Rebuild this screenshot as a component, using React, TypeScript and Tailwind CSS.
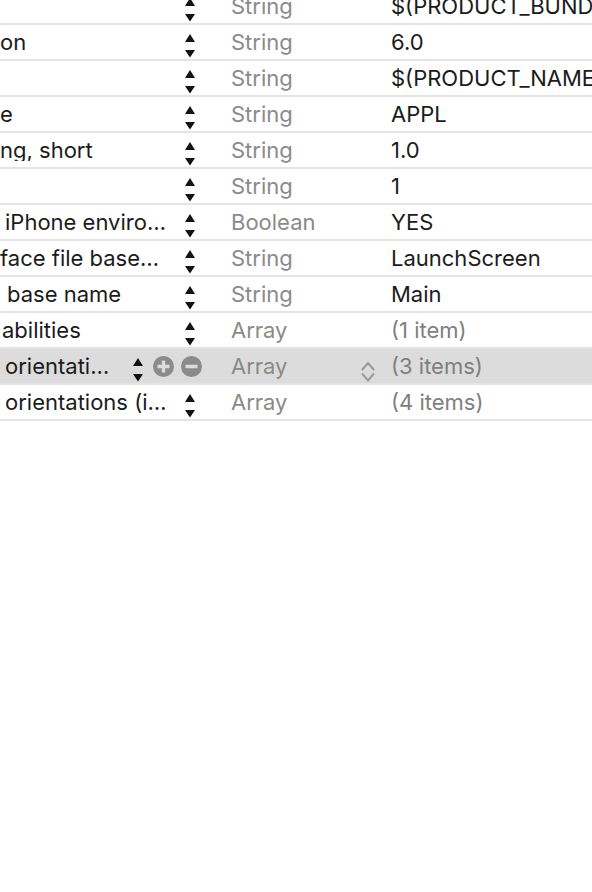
type Row = {
  key: string;
  pad: number;
  type: string;
  value: string;
  valueGray?: boolean;
  selected?: boolean;
};

const ROWS: Row[] = [
  { key: "", pad: 0, type: "String", value: "$(PRODUCT_BUNDLE_IDENTIFIER)" },
  { key: "on", pad: 0, type: "String", value: "6.0" },
  { key: "", pad: 0, type: "String", value: "$(PRODUCT_NAME)" },
  { key: "e", pad: 0, type: "String", value: "APPL" },
  { key: "ng, short", pad: 0, type: "String", value: "1.0" },
  { key: "", pad: 0, type: "String", value: "1" },
  { key: "iPhone enviro…", pad: 5, type: "Boolean", value: "YES" },
  { key: "face file base…", pad: 0, type: "String", value: "LaunchScreen" },
  { key: "base name", pad: 7, type: "String", value: "Main" },
  { key: "abilities", pad: 2, type: "Array", value: "(1 item)", valueGray: true },
  { key: "orientati…", pad: 5, type: "Array", value: "(3 items)", valueGray: true, selected: true },
  { key: "orientations (i…", pad: 5, type: "Array", value: "(4 items)", valueGray: true },
];

function Stepper() {
  return (
    <svg width="10" height="24" viewBox="0 0 10 24" className="self-start mt-[9px] shrink-0">
      <path d="M5 0 L10 8 L0 8 Z" fill="#111" />
      <path d="M0 16 L10 16 L5 23.5 Z" fill="#111" />
    </svg>
  );
}

function RoundButton({ minus }: { minus?: boolean }) {
  return (
    <svg width="21" height="21" viewBox="0 0 21 21" className="shrink-0">
      <circle cx="10.5" cy="10.5" r="10.5" fill="#8b8b8b" />
      <rect x="4.5" y="8.8" width="12" height="3.4" rx="0.5" fill="#dcdcdc" />
      {!minus && <rect x="8.8" y="4.5" width="3.4" height="12" rx="0.5" fill="#dcdcdc" />}
    </svg>
  );
}

function Chevrons() {
  return (
    <svg width="16" height="22" viewBox="0 0 16 22" className="self-start mt-[12px] shrink-0">
      <path d="M2 9 L8 2 L14 9" fill="none" stroke="#9a9a9a" strokeWidth="2" />
      <path d="M2 12.5 L8 19.5 L14 12.5" fill="none" stroke="#9a9a9a" strokeWidth="2" />
    </svg>
  );
}

function PlistRow({ row }: { row: Row }) {
  return (
    <div
      className={`flex h-[36px] items-center border-b-2 border-[#e4e4e4] ${
        row.selected ? "bg-[#dcdcdc]" : "bg-white"
      }`}
    >
      {row.selected ? (
        <div className="flex h-full w-[231px] shrink-0 items-center">
          <div className="w-[133px] shrink-0 overflow-hidden whitespace-nowrap text-[#1b1b1b]" style={{ paddingLeft: row.pad }}>
            {row.key}
          </div>
          <Stepper />
          <div className="ml-[10px]">
            <RoundButton />
          </div>
          <div className="ml-[7px]">
            <RoundButton minus />
          </div>
        </div>
      ) : (
        <div className="flex h-full w-[231px] shrink-0 items-center">
          <div className="w-[185px] shrink-0 overflow-hidden whitespace-nowrap text-[#1b1b1b]" style={{ paddingLeft: row.pad }}>
            {row.key}
          </div>
          <Stepper />
        </div>
      )}
      <div className="flex h-full w-[160px] shrink-0 items-center text-[#8a8a8a]">
        <span className="w-[129px] shrink-0">{row.type}</span>
        {row.selected && <Chevrons />}
      </div>
      <div className={`flex-1 overflow-hidden whitespace-nowrap ${row.valueGray ? "text-[#7f7f7f]" : "text-[#1b1b1b]"}`}>
        {row.value}
      </div>
    </div>
  );
}

export default function App() {
  return (
    <div className="h-[892px] w-[592px] overflow-hidden bg-white font-['Inter',sans-serif] text-[22px] leading-none">
      <div className="-mt-[11px]">
        {ROWS.map((r, i) => (
          <PlistRow key={i} row={r} />
        ))}
      </div>
    </div>
  );
}
